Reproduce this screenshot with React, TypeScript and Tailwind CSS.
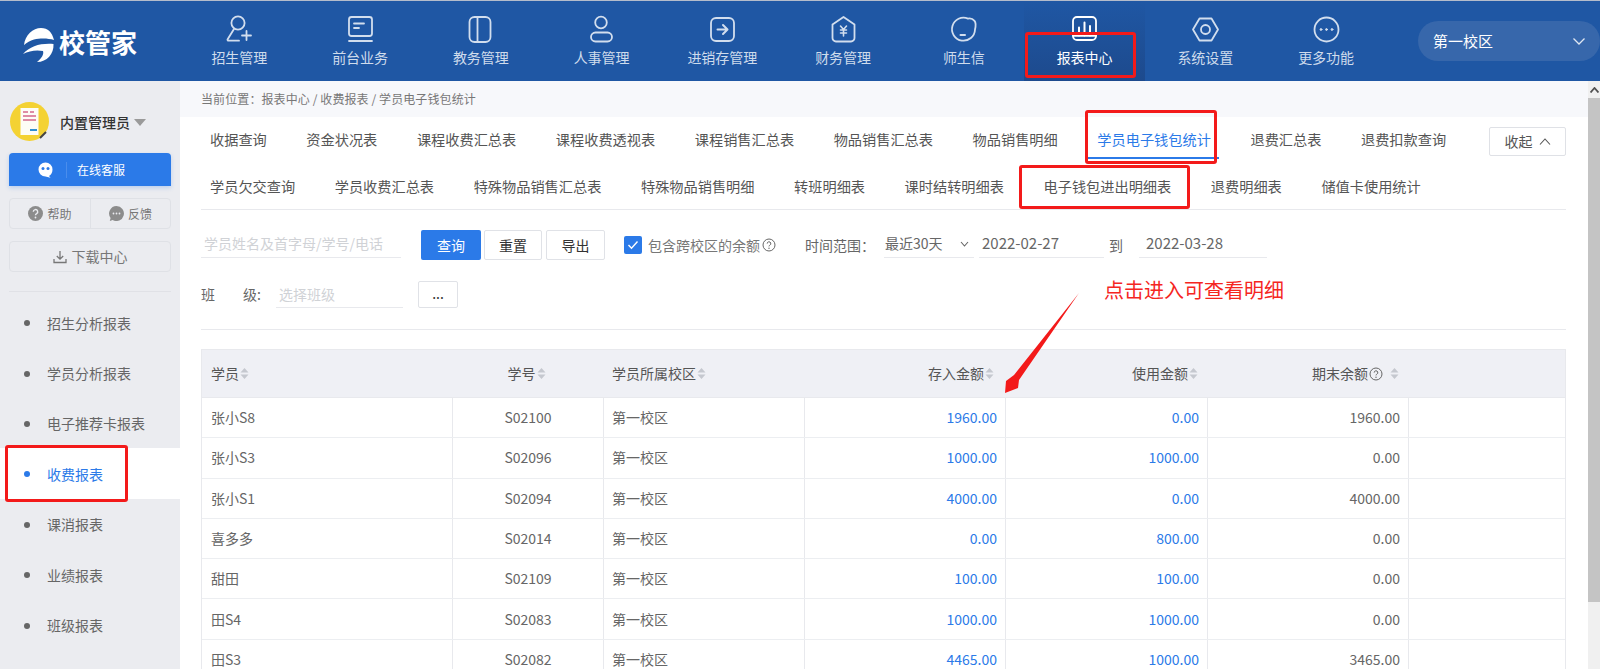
import React from "react";

const sw = { fill: "none", stroke: "currentColor", strokeWidth: 1.8, strokeLinecap: "round" as const, strokeLinejoin: "round" as const };

const navIcons: React.ReactNode[] = [
  <g {...sw}><circle cx="14" cy="9" r="6.6" /><path d="M10 15 L3.5 25.5 a1 1 0 0 0 1 1.2 H15" /><path d="M18 21.5 H27 M22.5 17 V26" /></g>,
  <g {...sw}><rect x="4" y="3" width="23" height="19" rx="2.5" /><path d="M9 9.5 H19 M9 14 H14" /><path d="M4 27 H27" /></g>,
  <g {...sw}><rect x="4.5" y="3" width="21" height="25" rx="5" /><path d="M12.5 3 V28" /></g>,
  <g {...sw}><circle cx="15" cy="8.5" r="5.8" /><rect x="5" y="18.5" width="21" height="9" rx="4.5" /></g>,
  <g {...sw}><rect x="4" y="4" width="23" height="23" rx="5" /><path d="M10.5 15.5 H20 M16 11 L20.5 15.5 L16 20" strokeWidth="2" /></g>,
  <g {...sw}><path d="M15.5 3 L26.5 10.5 V24 a3.5 3.5 0 0 1 -3.5 3.5 H8 A3.5 3.5 0 0 1 4.5 24 V10.5 Z" /><path d="M12.5 12 L15.5 15.5 L18.5 12 M12.5 16 H18.5 M12.5 19 H18.5 M15.5 15.5 V22" strokeWidth="1.6" /></g>,
  <g {...sw}><path d="M20 4.6 A11.5 11.5 0 1 0 27 15.5 C 27.8 12 27.5 8 26.5 6.8 C 24.5 4.5 22 4.2 20 4.6 Z" /><path d="M12.5 21 H17" strokeWidth="2" /></g>,
  <g {...sw}><rect x="4" y="3" width="23" height="23" rx="4" /><path d="M10 21.5 V13.5 M15.5 21.5 V8.5 M21 21.5 V12" strokeWidth="2" /><path d="M4 21.8 H27" /></g>,
  <g {...sw}><path d="M9.5 4.5 H21.5 L28 15.5 L21.5 26.5 H9.5 L3 15.5 Z" /><circle cx="15.5" cy="15.5" r="4.5" /></g>,
  <g {...sw}><circle cx="15.5" cy="15.5" r="12" /><circle cx="10" cy="15.5" r="0.9" fill="currentColor" strokeWidth="1" /><circle cx="15.5" cy="15.5" r="0.9" fill="currentColor" strokeWidth="1" /><circle cx="21" cy="15.5" r="0.9" fill="currentColor" strokeWidth="1" /></g>,
];

const navLabels = ["招生管理", "前台业务", "教务管理", "人事管理", "进销存管理", "财务管理", "师生信", "报表中心", "系统设置", "更多功能"];

const tabs1 = ["收据查询", "资金状况表", "课程收费汇总表", "课程收费透视表", "课程销售汇总表", "物品销售汇总表", "物品销售明细", "学员电子钱包统计", "退费汇总表", "退费扣款查询"];
const tabs2 = ["学员欠交查询", "学员收费汇总表", "特殊物品销售汇总表", "特殊物品销售明细", "转班明细表", "课时结转明细表", "电子钱包进出明细表", "退费明细表", "储值卡使用统计"];
const menu = ["招生分析报表", "学员分析报表", "电子推荐卡报表", "收费报表", "课消报表", "业绩报表", "班级报表"];
const rows = [
  ["张小S8", "S02100", "1960.00", "0.00", "1960.00"],
  ["张小S3", "S02096", "1000.00", "1000.00", "0.00"],
  ["张小S1", "S02094", "4000.00", "0.00", "4000.00"],
  ["喜多多", "S02014", "0.00", "800.00", "0.00"],
  ["甜田", "S02109", "100.00", "100.00", "0.00"],
  ["田S4", "S02083", "1000.00", "1000.00", "0.00"],
  ["田S3", "S02082", "4465.00", "1000.00", "3465.00"],
];

function Sort() {
  return (
    <svg width="9" height="13" viewBox="0 0 9 13" className="ml-[1px] shrink-0">
      <path d="M4.5 1 L8.5 5.5 H0.5 Z M0.5 7.5 H8.5 L4.5 12 Z" fill="#c5c8cf" />
    </svg>
  );
}

function Help() {
  return (
    <svg width="14" height="14" viewBox="0 0 14 14" className="shrink-0 text-[#666]">
      <circle cx="7" cy="7" r="6" fill="none" stroke="currentColor" />
      <path d="M5.2 5.6 a1.8 1.8 0 1 1 2.6 1.6 c-.6.3-.8.6-.8 1.2" fill="none" stroke="currentColor" />
      <circle cx="7" cy="10.2" r=".7" fill="currentColor" />
    </svg>
  );
}

const grid = "grid grid-cols-[251px_151px_201px_201px_202px_201px_1fr]";

export default function App() {
  return (
    <div className="relative w-[1600px] h-[669px] overflow-hidden bg-white font-['Noto_Sans_CJK_SC',sans-serif] text-[14px] text-[#666] border-t border-[#b4bccb]">
      {/* Header */}
      <header className="flex h-[80px] bg-[#1f57a4]">
        <div className="flex w-[180px] shrink-0 items-center pl-[23px] pt-[2px]">
          <svg width="31" height="34" viewBox="0 0 31 34" className="mt-[5px] shrink-0">
            <path d="M1 17 C2 7 10 0 18 0 C25 0 29 4 31 12 C25 10 17 10 11 11.5 C7 12.5 4 14.5 1 17 Z" fill="#fff" />
            <path d="M0 26 C7 18 18 15 30.5 16 C31 26 24 34 14 34 C19 30 21 26 20 23 C13 21.5 6 23 0 26 Z" fill="#fff" />
          </svg>
          <span className="ml-[5px] text-[26px] font-bold leading-none text-white">校管家</span>
        </div>
        <nav className="grid grid-cols-[repeat(10,120.75px)] -ml-[1px]">
          {navLabels.map((label, i) => (
            <div key={label} className={`flex flex-col items-center pt-[13px] ${i === 7 ? "bg-gradient-to-b from-[#1f57a4] to-[#1d4a8d]" : ""}`}>
              <svg width="31" height="31" viewBox="0 0 31 31" className={i === 7 ? "text-white" : "text-[#d2deee]"}>{navIcons[i]}</svg>
              <span className={`mt-[2px] leading-[20px] ${i === 7 ? "text-white" : "text-[#cfdcec]"}`}>{label}</span>
            </div>
          ))}
        </nav>
        <div className="ml-[31.5px] mt-[20px] flex h-[40px] flex-1 items-center justify-between rounded-l-full rounded-r-full bg-[#3767ab] pl-[15px] pr-[14px] text-[15px] text-white">
          <span>第一校区</span>
          <svg width="14" height="9" viewBox="0 0 14 9"><path d="M1.5 1.5 L7 7 L12.5 1.5" fill="none" stroke="#dfe7f2" strokeWidth="1.3" /></svg>
        </div>
      </header>

      <div className="flex h-[588px]">
        {/* Sidebar */}
        <aside className="w-[180px] shrink-0 bg-[#ebecf0]">
          <div className="flex items-center pl-[10px] pt-[21px]">
            <svg width="39" height="39" viewBox="0 0 39 39">
              <circle cx="19.5" cy="19.5" r="19.5" fill="#f4d233" />
              <rect x="10.5" y="6" width="18" height="27" fill="#fdfdf6" />
              <path d="M13 10 H18 M20 10 H24 M13 14 H26 M13 18 H26" stroke="#d4688a" strokeWidth="1.4" />
              <path d="M20 28 H27" stroke="#2f8fd0" strokeWidth="2" />
              <path d="M30 36 L36 30" stroke="#444" strokeWidth="2" />
            </svg>
            <span className="ml-[11px] font-medium text-[#333] leading-[20px]">内置管理员</span>
            <svg width="12" height="7" viewBox="0 0 12 7" className="ml-[4px] mt-[1px]"><path d="M0 0 H12 L6 7 Z" fill="#9a9a9a" /></svg>
          </div>
          <div className="mx-[9px] mt-[12px] flex h-[33px] items-center rounded-t-[4px] bg-[#2b7ae8] text-[12px] text-white shadow-[0_2px_4px_rgba(43,122,232,0.25)]">
            <svg width="15" height="16" viewBox="0 0 15 16" className="ml-[29px]">
              <path d="M7.5 0.5 a7 7 0 0 1 7 7 c0 3 -1.5 5.5 -3.5 6.5 l1.5 1.8 L7.5 14.5 a7 7 0 0 1 0 -14 Z" fill="#fff" />
              <circle cx="5" cy="6.5" r="1.5" fill="#2b7ae8" />
              <circle cx="10" cy="6.5" r="1.5" fill="#2b7ae8" />
            </svg>
            <span className="ml-[13px] mr-[10px] h-[16px] w-px bg-[#4a8dec]" />
            <span>在线客服</span>
          </div>
          <div className="mx-[9px] mt-[12px] flex h-[31px] rounded-[4px] border border-[#dfe1e6] text-[12px] text-[#777]">
            <div className="flex w-[81px] items-center justify-center gap-[4px] border-r border-[#dfe1e6]">
              <svg width="15" height="15" viewBox="0 0 15 15"><circle cx="7.5" cy="7.5" r="7.5" fill="#8c8c8c" /><path d="M5.3 5.8 a2.2 2.2 0 1 1 3.3 1.9 c-.8.4-1.1.8-1.1 1.6" fill="none" stroke="#ebecf0" strokeWidth="1.4" /><circle cx="7.5" cy="11.5" r=".9" fill="#ebecf0" /></svg>
              <span>帮助</span>
            </div>
            <div className="flex flex-1 items-center justify-center gap-[4px]">
              <svg width="15" height="15" viewBox="0 0 15 15"><path d="M7.5 0 a7.5 7.5 0 1 1 -3.8 14 L0.8 15 L1.6 12 A7.5 7.5 0 0 1 7.5 0 Z" fill="#8c8c8c" /><circle cx="4.5" cy="7.5" r=".9" fill="#ebecf0" /><circle cx="7.5" cy="7.5" r=".9" fill="#ebecf0" /><circle cx="10.5" cy="7.5" r=".9" fill="#ebecf0" /></svg>
              <span>反馈</span>
            </div>
          </div>
          <div className="mx-[9px] mt-[12px] flex h-[31px] items-center justify-center gap-[5px] rounded-[4px] border border-[#dfe1e6] text-[#777]">
            <svg width="14" height="14" viewBox="0 0 14 14" fill="none" stroke="#777" strokeWidth="1.3"><path d="M7 1 V9 M3.8 6 L7 9.2 L10.2 6 M1 9 V12.5 H13 V9" /></svg>
            <span>下载中心</span>
          </div>
          <div className="mx-[9px] mt-[19px] h-px bg-[#e0e1e6]" />
          <ul className="mt-[5px]">
            {menu.map((m) => {
              const on = m === "收费报表";
              return (
                <li key={m} className={`flex h-[50.4px] items-center pl-[24px] pt-[2px] ${on ? "bg-white text-[#2b7ae8]" : "text-[#666]"}`}>
                  <span className={`mr-[17px] h-[6px] w-[6px] rounded-full ${on ? "bg-[#2b7ae8]" : "bg-[#666]"}`} />
                  {m}
                </li>
              );
            })}
          </ul>
        </aside>

        {/* Main */}
        <main className="w-[1408px] shrink-0">
          <div className="flex h-[36px] items-center bg-[#f7f8fb] pl-[21px] text-[12px] tracking-[0.1px] text-[#777]">当前位置：报表中心 / 收费报表 / 学员电子钱包统计</div>
          <div className="ml-[21px] mr-[22px]">
            <div className="border-b border-[#e8e9ed] text-[14.2px]">
              <div className="relative flex h-[45px] items-center gap-[39.6px] pl-[9px] text-[#555]">
                {tabs1.map((t) => (
                  <span key={t} className={`relative shrink-0 ${t === "学员电子钱包统计" ? "text-[#2b7ae8]" : ""}`}>
                    {t}
                    {t === "学员电子钱包统计" && <span className="absolute -left-[9px] -right-[8px] top-[28px] h-[2px] bg-[#2b7ae8]" />}
                  </span>
                ))}
                <button className="absolute right-0 top-[10px] flex h-[29px] w-[77px] items-center justify-center gap-[6px] rounded-[2px] border border-[#dfe1e6] bg-white text-[14px] text-[#555]">
                  收起
                  <svg width="12" height="7" viewBox="0 0 12 7"><path d="M1 6.5 L6 1 L11 6.5" fill="none" stroke="#555" strokeWidth="1.1" /></svg>
                </button>
              </div>
              <div className="flex h-[47px] items-center gap-[39.6px] pl-[9px] pt-[2px] text-[#555]">
                {tabs2.map((t) => <span key={t} className="shrink-0">{t}</span>)}
              </div>
            </div>

            <div className="mt-[20px] flex h-[30px] items-center">
              <div className="flex h-[28px] w-[200px] shrink-0 items-center self-start whitespace-nowrap border-b border-[#e8e9ed] pl-[3px] text-[14px] text-[#d0d2d6]">学员姓名及首字母/学号/电话</div>
              <button className="ml-[20px] h-[30px] w-[60px] rounded-[2px] bg-[#2b7ae8] text-white">查询</button>
              <button className="ml-[3px] h-[30px] w-[58px] rounded-[2px] border border-[#e0e2e7] text-[#333]">重置</button>
              <button className="ml-[4px] h-[30px] w-[59px] rounded-[2px] border border-[#e0e2e7] text-[#333]">导出</button>
              <span className="ml-[19px] flex h-[18px] w-[18px] items-center justify-center rounded-[2px] bg-[#2b7ae8]">
                <svg width="12" height="10" viewBox="0 0 12 10"><path d="M1.5 5 L4.5 8.2 L10.5 1.5" fill="none" stroke="#fff" strokeWidth="1.4" /></svg>
              </span>
              <span className="ml-[6px] w-[114px] shrink-0 whitespace-nowrap text-[#777]">包含跨校区的余额</span>
              <Help />
              <span className="ml-[29px] w-[62px] shrink-0 whitespace-nowrap text-[#666]">时间范围：</span>
              <div className="ml-[17px] flex h-[28px] w-[90px] shrink-0 items-center justify-between self-start border-b border-[#e8e9ed] pl-[1px] pr-[5px] text-[#666]">
                <span>最近30天</span>
                <svg width="9" height="6" viewBox="0 0 9 6"><path d="M1 1 L4.5 5 L8 1" fill="none" stroke="#666" strokeWidth="1.1" /></svg>
              </div>
              <div className="ml-[5px] flex h-[28px] w-[125px] shrink-0 items-center self-start border-b border-[#e8e9ed] pl-[3px] text-[15px] text-[#666]">2022-02-27</div>
              <span className="ml-[5px] w-[30px] shrink-0 text-[#666]">到</span>
              <div className="flex h-[28px] w-[128px] shrink-0 items-center self-start border-b border-[#e8e9ed] pl-[7px] text-[15px] text-[#666]">2022-03-28</div>
            </div>

            <div className="mt-[21px] flex h-[27px] items-center">
              <span className="w-[75px] shrink-0 whitespace-pre text-[#666]">班　　级:</span>
              <div className="flex h-[27px] w-[127px] shrink-0 items-center border-b border-[#e8e9ed] pl-[3px] text-[#d0d2d6]">选择班级</div>
              <button className="ml-[15px] h-[27px] w-[40px] rounded-[2px] border border-[#e0e2e7] pb-[2px] text-[#333]">...</button>
            </div>

            <div className="mt-[21px] h-px bg-[#e8e9ed]" />

            <div className="mt-[19px] border-x border-[#e8e9ed]">
              <div className={`${grid} h-[49px] items-center border-y border-[#e8e9ed] bg-[#eff0f5] text-[#555]`}>
                <div className="flex items-center pl-[9px]">学员<Sort /></div>
                <div className="flex items-center justify-center pr-[4px]">学号<Sort /></div>
                <div className="flex items-center pl-[8px]">学员所属校区<Sort /></div>
                <div className="flex items-center justify-end pr-[12px]">存入金额<Sort /></div>
                <div className="flex items-center justify-end pr-[10px]">使用金额<Sort /></div>
                <div className="flex items-center justify-end pr-[10px]">期末余额<span className="ml-[1px]"><Help /></span><span className="ml-[6px]"><Sort /></span></div>
                <div />
              </div>
              {rows.map((r) => (
                <div key={r[0]} className={`${grid} h-[40.3px] border-b border-[#eceef1] text-[#666]`}>
                  <div className="flex items-center border-r border-[#e8e9ed] pl-[9px]">{r[0]}</div>
                  <div className="flex items-center justify-center border-r border-[#e8e9ed]">{r[1]}</div>
                  <div className="flex items-center border-r border-[#e8e9ed] pl-[8px]">第一校区</div>
                  <div className="flex items-center justify-end border-r border-[#e8e9ed] pr-[8px] text-[#2b7ae8]">{r[2]}</div>
                  <div className="flex items-center justify-end border-r border-[#e8e9ed] pr-[8px] text-[#2b7ae8]">{r[3]}</div>
                  <div className="flex items-center justify-end border-r border-[#e8e9ed] pr-[8px]">{r[4]}</div>
                  <div />
                </div>
              ))}
            </div>
          </div>
        </main>

        {/* Scrollbar */}
        <div className="flex w-[12px] flex-col bg-[#f0f0f0]">
          <div className="flex h-[17px] items-center justify-center">
            <svg width="9" height="6" viewBox="0 0 9 6"><path d="M0.5 5.5 L4.5 1 L8.5 5.5" fill="none" stroke="#505050" strokeWidth="1.8" /></svg>
          </div>
          <div className="h-[504px] bg-[#c4c4c4]" />
        </div>
      </div>

      {/* Red annotations */}
      <div className="absolute left-[1025px] top-[31px] h-[46px] w-[111px] rounded-[3px] border-[3px] border-[#f31a1a]" />
      <div className="absolute left-[1085px] top-[109px] h-[54px] w-[132px] rounded-[3px] border-[3px] border-[#f31a1a]" />
      <div className="absolute left-[1019px] top-[164px] h-[44px] w-[171px] rounded-[3px] border-[3px] border-[#f31a1a]" />
      <div className="absolute left-[5px] top-[444px] h-[57px] w-[123px] rounded-[3px] border-[3px] border-[#f31a1a]" />
      <span className="absolute left-[1104px] top-[275px] text-[20px] leading-[28px] text-[#f5261f]">点击进入可查看明细</span>
      <svg className="absolute left-[1000px] top-[288px]" width="84" height="110" viewBox="0 0 84 110">
        <path d="M79 4 L14 86 L6 92 L5 104 L18 99 L19 91 Z" fill="#f31a1a" />
      </svg>
    </div>
  );
}
